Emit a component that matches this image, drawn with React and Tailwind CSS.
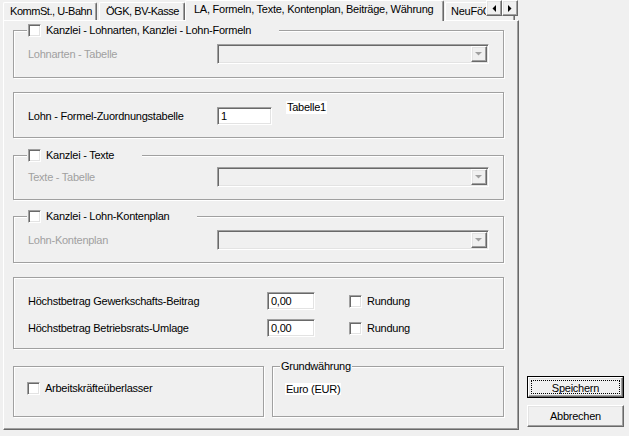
const sunken = 'border border-t-[#a0a0a0] border-l-[#a0a0a0] border-r-white border-b-white shadow-[inset_1px_1px_0_#696969,inset_-1px_-1px_0_#e3e3e3]';
const raised = 'border border-t-white border-l-white border-r-[#696969] border-b-[#696969] shadow-[inset_-1px_-1px_0_#a0a0a0,inset_1px_1px_0_#e3e3e3]';
const etched = 'border border-[#a0a0a0] shadow-[inset_1px_1px_0_#fff,1px_1px_0_#fff]';

const CheckBox = () => <span className={`block w-[13px] h-[13px] shrink-0 bg-white ${sunken}`} />;

const Combo = () => (
    <div className={`w-[272px] h-[20px] flex justify-end p-[1px] bg-[#f0f0f0] ${sunken}`}>
        <div className={`w-[16px] h-full flex items-center justify-center bg-[#f0f0f0] ${raised}`}>
            <svg width="8" height="5" viewBox="0 0 8 5">
                <path d="M1 1h5L3.5 3.5z" fill="#fff" />
                <path d="M0 0h7L3.5 3.5z" fill="#a0a0a0" />
            </svg>
        </div>
    </div>
);

const Input = ({ value, width }) => (
    <div className={`${width} h-[18px] bg-white pl-[3px] leading-[16px] ${sunken}`}>{value}</div>
);

// legend sits inside the fieldset's padding, so pull it back to x=27
const CheckGroup = ({ title, label, height, mt, pt }) => (
    <fieldset className={`w-[491px] ${height} ${mt} pl-[14px] ${etched}`}>
        <legend className="-ml-[1px] pl-[1px] pr-[28px] bg-[#f0f0f0]">
            <div className="flex items-center h-[13px]">
                <CheckBox />
                <span className="ml-[5px] leading-[13px] whitespace-nowrap">{title}</span>
            </div>
        </legend>
        <div className={`flex items-center ${pt}`}>
            <span className="w-[189px] text-[#a0a0a0] leading-[13px]">{label}</span>
            <Combo />
        </div>
    </fieldset>
);

const Tab = ({ children, width, active = false, className = '' }) => (
    <div
        className={`${width} ${active ? 'h-[21px] relative z-10' : 'h-[18px] mt-[2px]'} shrink-0 pt-[2px] bg-[#f0f0f0] whitespace-nowrap overflow-hidden leading-[13px] border-l border-t border-r border-l-white border-t-white border-r-[#696969] rounded-tl-[2px] rounded-tr-[2px] shadow-[inset_-1px_0_0_#a0a0a0] ${className}`}
    >
        {children}
    </div>
);

const ArrowButton = ({ dir }) => (
    <div className={`w-[16px] h-[16px] flex items-center justify-center bg-[#f0f0f0] ${raised}`}>
        <svg width="4" height="7" viewBox="0 0 4 7">
            {dir === 'left' ? <path d="M4 0v7L0.5 3.5z" fill="#000" /> : <path d="M0 0v7l3.5-3.5z" fill="#000" />}
        </svg>
    </div>
);

export default function App() {
    return (
        <div className="w-[629px] h-[436px] bg-[#f0f0f0] flex pl-[3px] text-[11px] tracking-[-0.25px] text-black font-['Liberation_Sans',Arial,sans-serif] overflow-hidden">
            <div className="w-[516px] flex flex-col">
                <div className="relative z-10 h-[21px] -mb-[1px] flex items-start overflow-hidden">
                    <Tab width="w-[94px]" className="pl-[6px] tracking-[-0.45px]">KommSt., U-Bahn</Tab>
                    <Tab width="w-[86px]" className="ml-[2px] pl-[6px] tracking-[-0.45px]">ÖGK, BV-Kasse</Tab>
                    <Tab width="w-[259px]" active className="pl-[8px]">LA, Formeln, Texte, Kontenplan, Beiträge, Währung</Tab>
                    <Tab width="w-[70px]" className="ml-[1px] pl-[5px]">NeuFöG</Tab>
                    <div className="absolute right-[1px] top-0 flex">
                        <ArrowButton dir="left" />
                        <ArrowButton dir="right" />
                    </div>
                </div>
                <div className="h-[410px] flex flex-col pl-[9px] border border-t-white border-l-white border-r-[#696969] border-b-[#696969] shadow-[inset_-1px_-1px_0_#a0a0a0]">
                    <CheckGroup
                        title="Kanzlei - Lohnarten, Kanzlei - Lohn-Formeln"
                        label="Lohnarten - Tabelle"
                        height="h-[54px]"
                        mt="mt-[3px]"
                        pt="pt-[7px]"
                    />

                    <div className={`w-[491px] h-[46px] mt-[14px] pl-[14px] pt-[8px] flex items-start ${etched}`}>
                        <div className="flex items-center mt-[6px]">
                            <span className="w-[189px] leading-[13px]">Lohn - Formel-Zuordnungstabelle</span>
                            <Input value="1" width="w-[55px]" />
                        </div>
                        <span className="ml-[14px] bg-white leading-[13px] px-[1px]">Tabelle1</span>
                    </div>

                    <CheckGroup
                        title="Kanzlei - Texte"
                        label="Texte - Tabelle"
                        height="h-[51px]"
                        mt="mt-[11px]"
                        pt="pt-[5px]"
                    />

                    <CheckGroup
                        title="Kanzlei - Lohn-Kontenplan"
                        label="Lohn-Kontenplan"
                        height="h-[53px]"
                        mt="mt-[10px]"
                        pt="pt-[7px]"
                    />

                    <div className={`w-[491px] h-[72px] mt-[14px] pl-[14px] pt-[14px] flex flex-col gap-[9px] ${etched}`}>
                        {['Höchstbetrag Gewerkschafts-Beitrag', 'Höchstbetrag Betriebsrats-Umlage'].map((label) => (
                            <div key={label} className="flex items-center">
                                <span className="w-[239px] leading-[13px]">{label}</span>
                                <Input value="0,00" width="w-[48px]" />
                                <span className="ml-[34px]"><CheckBox /></span>
                                <span className="ml-[5px] leading-[13px]">Rundung</span>
                            </div>
                        ))}
                    </div>

                    <div className="flex items-start mt-[11px] gap-[8px]">
                        <div className={`w-[251px] h-[51px] mt-[6px] pl-[13px] pt-[15px] flex items-start ${etched}`}>
                            <CheckBox />
                            <span className="ml-[5px] leading-[13px]">Arbeitskräfteüberlasser</span>
                        </div>
                        <fieldset className={`w-[232px] h-[57px] pl-[12px] ${etched}`}>
                            <legend className="-ml-[5px] px-[1px] leading-[13px] bg-[#f0f0f0]">Grundwährung</legend>
                            <div className="pt-[8px]">
                                <span className="bg-white leading-[13px] px-[1px]">Euro (EUR)</span>
                            </div>
                        </fieldset>
                    </div>
                </div>
            </div>

            <div className="flex-1 flex flex-col justify-end items-start pl-[8px] pb-[9px] gap-[7px]">
                <button type="button" className="w-[97px] h-[22px] border border-black">
                    <div className={`w-full h-full p-[2px] ${raised}`}>
                        <div className="w-full h-full border border-dotted border-black leading-[14px]">Speichern</div>
                    </div>
                </button>
                <button type="button" className={`w-[97px] h-[22px] leading-[18px] ${raised}`}>Abbrechen</button>
            </div>
        </div>
    );
}
